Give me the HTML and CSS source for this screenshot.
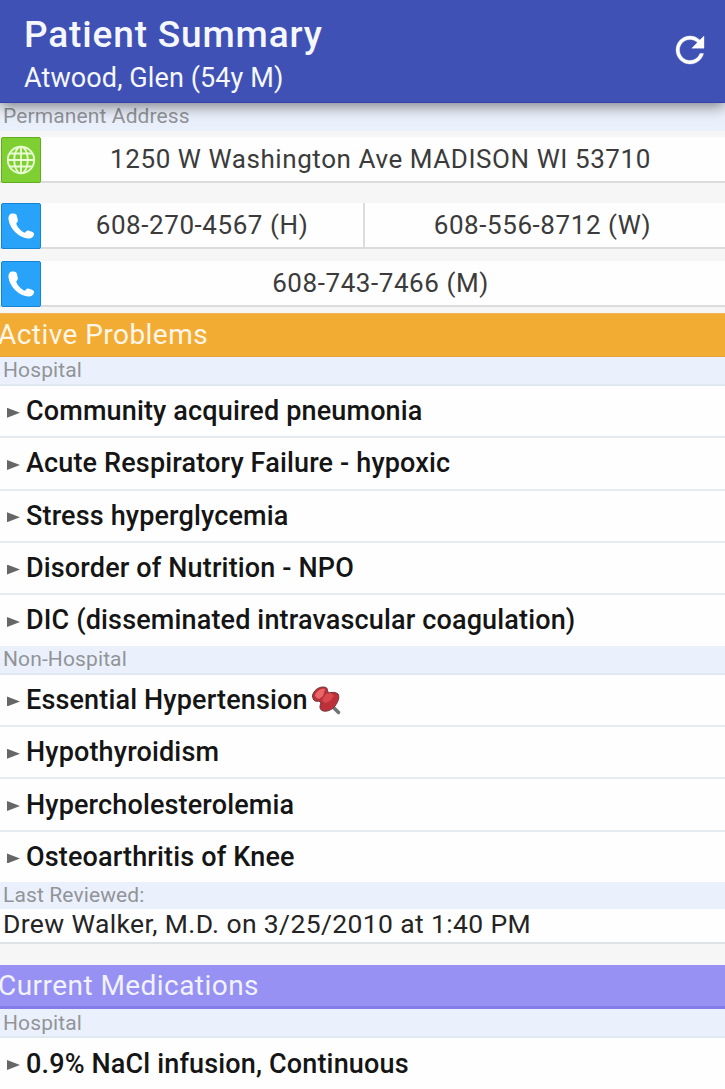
FILE: index.html
```html
<!DOCTYPE html>
<html lang="en">
<head>
    <meta charset="UTF-8">
    <meta name="viewport" content="width=device-width, initial-scale=1.0">
    <title>Patient Summary</title>
    <link rel="stylesheet" href="styles.css">
</head>
<body>
    <header class="app-bar">
        <div>
            <h1>Patient Summary</h1>
            <p class="patient">Atwood, Glen (54y M)</p>
        </div>
        <svg class="refresh" viewBox="0 0 24 24" fill="#fff" stroke="#fff" stroke-width=".2">
            <path d="M17.65 6.35C16.2 4.9 14.21 4 12 4c-4.42 0-7.99 3.58-7.99 8s3.57 8 7.99 8c3.73 0 6.84-2.55 7.73-6h-2.08c-.82 2.33-3.04 4-5.65 4-3.31 0-6-2.69-6-6s2.69-6 6-6c1.66 0 3.14.69 4.22 1.78L13 11h7V4l-2.35 2.35z"/>
        </svg>
    </header>

    <main>
        <!-- Contact -->
        <h3 class="label address-label">Permanent Address</h3>
        <div class="contact">
            <span class="icon map">
                <svg viewBox="0 0 30 30" fill="none" stroke="#e9fbd2" stroke-width="1.9">
                    <circle cx="15" cy="15" r="13.2"/>
                    <ellipse cx="15" cy="15" rx="6.8" ry="13.2"/>
                    <path d="M15 2v26M2 15h26M4 8.5h22M4 21.5h22"/>
                </svg>
            </span>
            <span class="value">1250 W Washington Ave MADISON WI 53710</span>
        </div>
        <div class="contact phones">
            <span class="icon call">
                <svg viewBox="0 0 28 28" fill="#fff"><path d="M5.5 1.5C3 1.5 1.3 3.5 1.5 7c.4 4.5 3.2 9.8 7.1 13.5 4.1 3.9 9.5 6.5 13.9 6 2.900-.3 4.400-2.200 4.500-4.300.1-1.300-.8-2.100-2-2.500l-3-1c-1.200-.4-2.200 0-3 .9l-1 1.200c-4-1.400-7.600-5.300-8.800-9.300l1-1.300c.7-.9.8-1.800.5-3l-.9-3.700C9.300 2.100 7.800 1.500 5.500 1.500z"/></svg>
            </span>
            <span class="value home">608-270-4567 (H)</span>
            <span class="value work">608-556-8712 (W)</span>
        </div>
        <div class="contact mobile">
            <span class="icon call">
                <svg viewBox="0 0 28 28" fill="#fff"><path d="M5.5 1.5C3 1.5 1.3 3.5 1.5 7c.4 4.5 3.2 9.8 7.1 13.5 4.1 3.9 9.5 6.5 13.9 6 2.900-.3 4.400-2.200 4.500-4.300.1-1.300-.8-2.100-2-2.500l-3-1c-1.200-.4-2.200 0-3 .9l-1 1.200c-4-1.400-7.600-5.300-8.800-9.300l1-1.300c.7-.9.8-1.800.5-3l-.9-3.700C9.300 2.100 7.800 1.500 5.500 1.500z"/></svg>
            </span>
            <span class="value">608-743-7466 (M)</span>
        </div>

        <!-- Problems -->
        <h2 class="section problems">Active Problems</h2>
        <h3 class="label">Hospital</h3>
        <ul class="list">
            <li><span>Community acquired pneumonia</span></li>
            <li><span>Acute Respiratory Failure - hypoxic</span></li>
            <li><span>Stress hyperglycemia</span></li>
            <li><span>Disorder of Nutrition - NPO</span></li>
            <li><span>DIC (disseminated intravascular coagulation)</span></li>
        </ul>
        <h3 class="label">Non-Hospital</h3>
        <ul class="list">
            <li><span>Essential Hypertension</span>
                <svg class="pin" viewBox="0 0 30 30">
                    <path d="M21 21l6.5 6.5" stroke="#70747a" stroke-width="3.5" stroke-linecap="round"/>
                    <path d="M1.5 11C2 6 7 2 12 2c3 0 4.5 1 4.5 3.5l1 2.500c3-1 7.500-1 9.500 1 2 3 0 8-3 12-3 4-9 6.500-13 4.500-2.500-1.500-2.500-4.500-1-7.500l-2-2c-3 1-6 0-6.500-5z" fill="#bd303a" stroke="#713238" stroke-width="1"/>
                    <path d="M4 10c2-4 6-7 10-6l-2 7-4 3c-2-1-4-2-4-4z" fill="#e8686a"/>
                    <path d="M15 9l5-1 3 3-4 5-5 2-3-3z" fill="#d8484f"/>
                </svg>
            </li>
            <li><span>Hypothyroidism</span></li>
            <li><span>Hypercholesterolemia</span></li>
            <li><span>Osteoarthritis of Knee</span></li>
        </ul>
        <h3 class="label reviewed-label">Last Reviewed:</h3>
        <p class="reviewed">Drew Walker, M.D. on 3/25/2010 at 1:40 PM</p>

        <!-- Medications -->
        <h2 class="section medications">Current Medications</h2>
        <h3 class="label">Hospital</h3>
        <ul class="list">
            <li><span>0.9% NaCl infusion, Continuous</span></li>
        </ul>
    </main>
</body>
</html>
```
FILE: styles.css
```css
* {
    box-sizing: border-box;
}

body {
    margin: 0;
    height: 1089px;
    background: #f6f6f6;
    font-family: Roboto, sans-serif;
    color: #151515;
    overflow: hidden;
}

h1, h2, h3, p, ul {
    margin: 0;
    padding: 0;
}

.app-bar {
    position: relative;
    z-index: 1;
    display: flex;
    justify-content: space-between;
    height: 103px;
    padding: 15px 14px 0 24px;
    background: #3f51b5;
    border-bottom: 1px solid #3442ad;
    box-shadow: 0 3px 14px rgba(0, 0, 0, 0.5);
    color: #f5f7ff;
}

h1 {
    font-size: 37px;
    font-weight: 500;
    line-height: 40px;
    letter-spacing: 0.85px;
}

.patient {
    margin-top: 4px;
    font-size: 27px;
    line-height: 38px;
    letter-spacing: 0.1px;
}

.refresh {
    width: 42px;
    height: 42px;
    margin-top: 14px;
}

.label {
    height: 29px;
    padding-left: 3px;
    background: #ebf1fc;
    border-bottom: 2px solid #e0e8f2;
    color: #929499;
    font-size: 21px;
    font-weight: 400;
    line-height: 26px;
    letter-spacing: 0.12px;
}

.address-label {
    height: 28px;
    border-bottom: 0;
}

.contact {
    display: flex;
    height: 46px;
    margin-top: 6px;
    padding: 0 5px 0 1px;
    background: #fefefe;
    border-bottom: 2px solid #dcdcdc;
}

.phones {
    margin-top: 20px;
}

.mobile {
    margin-top: 12px;
}

.icon {
    display: flex;
    flex: none;
    align-items: center;
    justify-content: center;
    width: 40px;
    height: 46px;
    border-radius: 2px;
}

.map {
    background: #7ed032;
    border: 1px solid #5fae1c;
}

.map svg {
    width: 30px;
    height: 30px;
}

.call {
    background: #29a3fa;
    border: 1px solid #1484d4;
}

.call svg {
    width: 28px;
    height: 28px;
}

.value {
    flex: 1;
    color: #3b3b3b;
    font-size: 26px;
    line-height: 44px;
    letter-spacing: 0.57px;
    text-align: center;
}

.home {
    flex: 0 0 322px;
}

.work {
    border-left: 2px solid #dcdcdc;
}

.section {
    height: 44px;
    color: #fff6e8;
    font-size: 28px;
    font-weight: 400;
    line-height: 42px;
    letter-spacing: 0.45px;
    text-indent: -2px;
}

.problems {
    margin-top: 6px;
    background: #f2ac34;
    border-top: 1px solid #efb558;
    border-bottom: 1px solid #e8a43c;
}

.medications {
    margin-top: 21px;
    background: #9691f3;
    border-bottom: 3px solid #847ce9;
    color: #f2f2ff;
}

.medications + .label {
    line-height: 28px;
}

.list {
    list-style: none;
    background: #fefefe;
}

.list li {
    display: flex;
    align-items: center;
    height: 52.3px;
    padding-left: 7px;
    border-bottom: 2px solid #e6ebf0;
    font-size: 27px;
    font-weight: 500;
    line-height: 48px;
    letter-spacing: 0.15px;
}

.list li:last-child {
    height: 50.6px;
    border-bottom: 0;
}

.list li::before {
    content: "";
    width: 13px;
    height: 10px;
    margin: 3px 6px 0 0;
    background: #666;
    clip-path: polygon(0 0, 100% 50%, 0 100%);
}

.pin {
    width: 30px;
    height: 30px;
    margin-left: 3px;
}

.reviewed-label {
    height: 27px;
    border-bottom: 0;
}

.reviewed {
    height: 35px;
    padding-left: 3px;
    background: #fefefe;
    border-bottom: 2px solid #dfe2e5;
    color: #242424;
    font-size: 26.5px;
    line-height: 30px;
    letter-spacing: 0.37px;
}
```
